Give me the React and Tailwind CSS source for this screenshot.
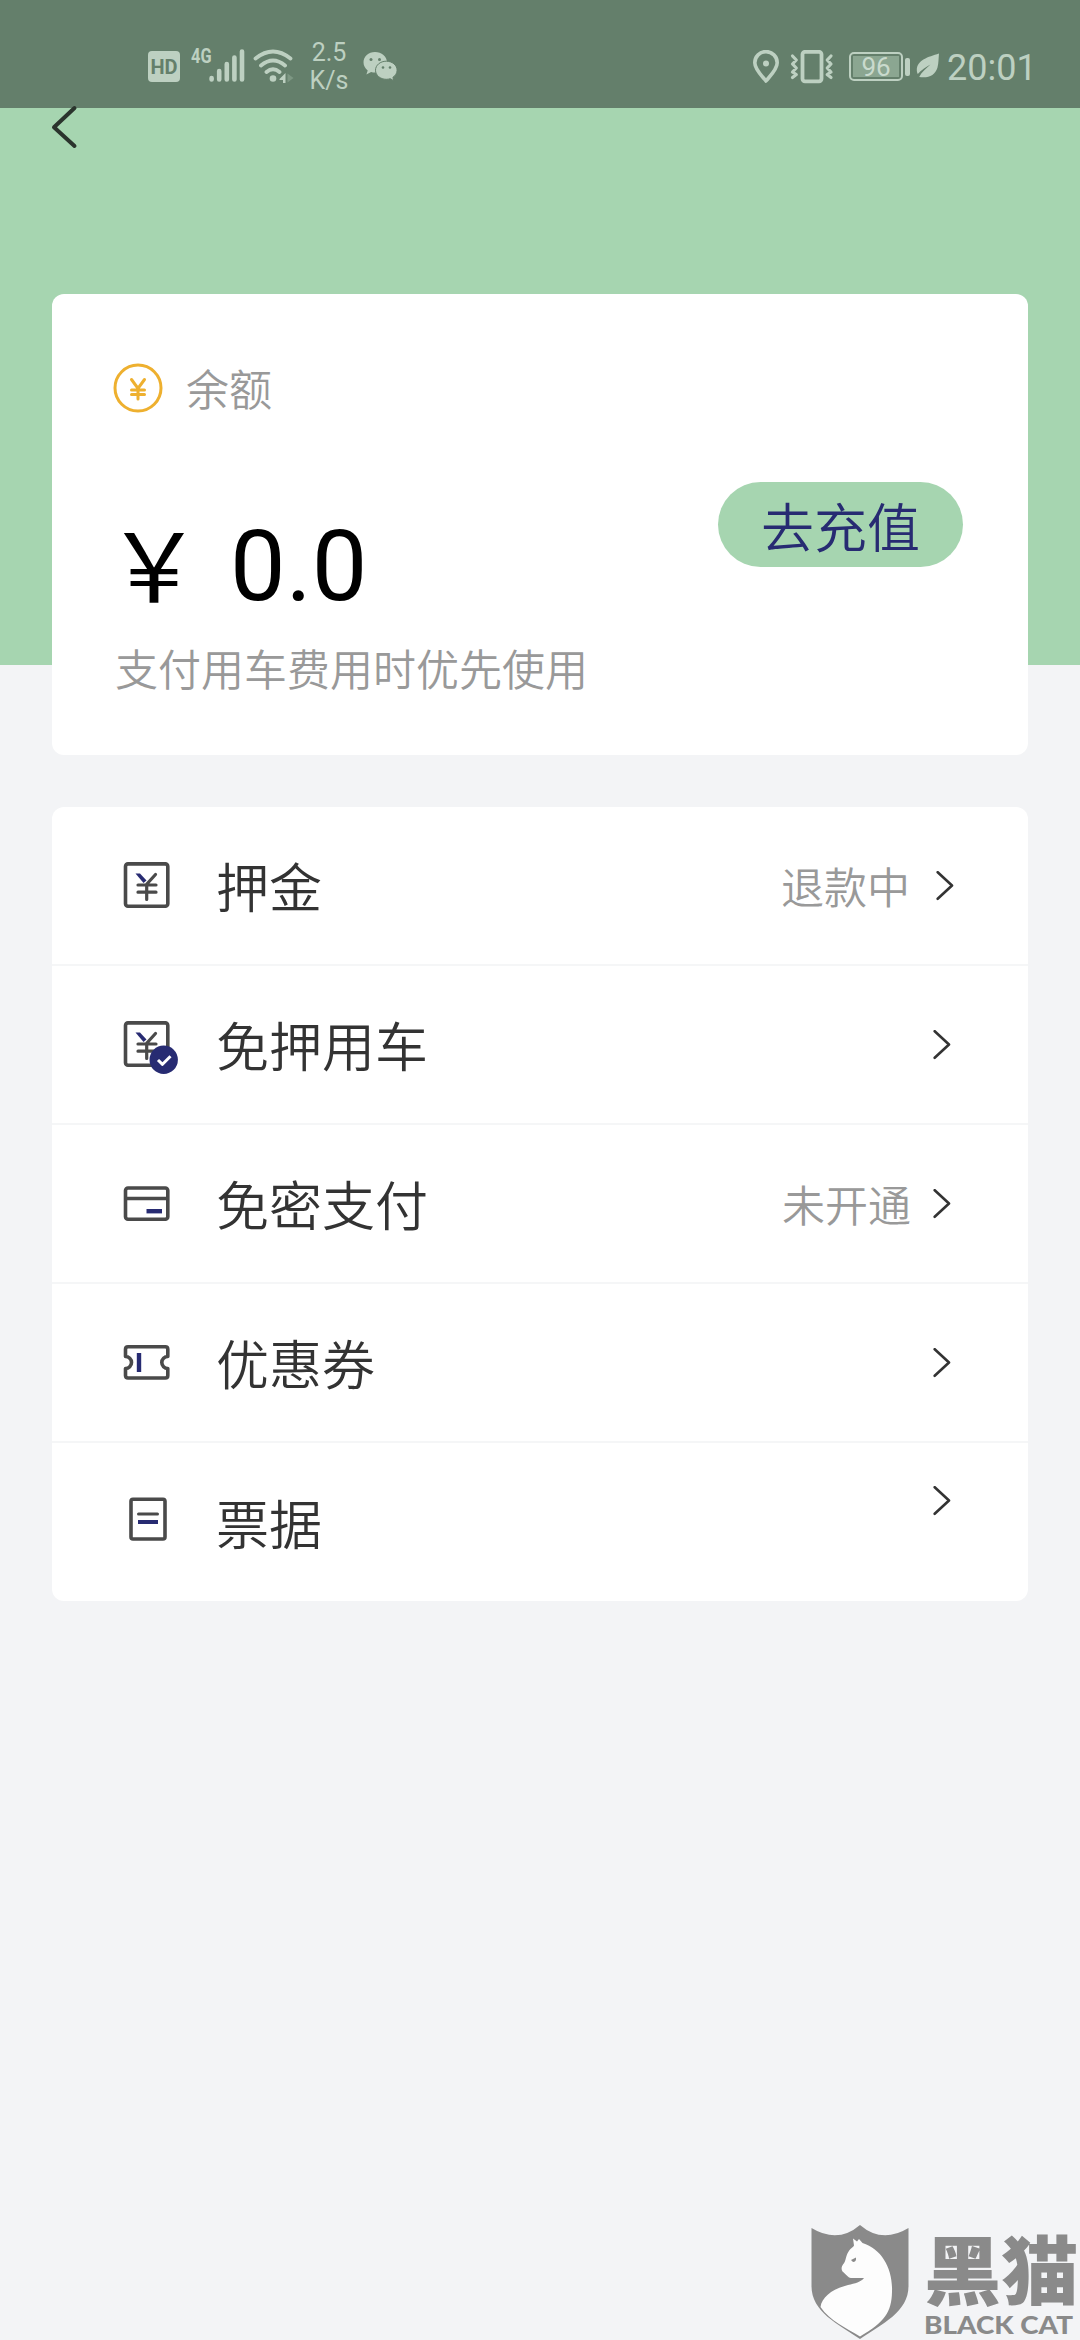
const cjk = "font-['Noto_Sans_CJK_SC',sans-serif]";
const roboto = "font-[Roboto,'Noto_Sans_CJK_SC',sans-serif]";

function StatusBar() {
  return (
    <div className={`flex h-[108px] items-start bg-[#647f6b] pl-[148px] text-[#bdd0c1] ${roboto}`}>
      <div className="mt-[51px] flex h-[31px] w-8 items-center justify-center rounded-[4px] bg-[#bdd0c1] text-[20px] leading-none font-bold text-[#647f6b]">
        HD
      </div>
      <span className="mt-[45px] ml-[11px] w-[18px] origin-left scale-x-[0.78] text-[21px] leading-[23px] font-bold">4G</span>
      <svg className="mt-[49px]" width="36" height="34" viewBox="0 0 36 34" stroke="currentColor" strokeWidth="4.600" strokeLinecap="round">
        <path d="M2.600 30.500V29M10.200 30.500V22M17.800 30.500V15M25.400 30.500V8.500M33 30.500V2.500" />
      </svg>
      <svg className="mt-[48px] ml-[8px]" width="42" height="36" viewBox="0 0 42 36" fill="none" stroke="currentColor" strokeWidth="3.800" strokeLinecap="round">
        <path d="M2.500 10.500Q20 -3.500 37.500 10.500M8 17.500Q20 7.500 32 17.500M13.500 24Q20 18.500 26.500 24" />
        <circle cx="20" cy="30.500" r="3.300" fill="currentColor" stroke="none" />
        <path d="M26.500 31l6-6v10h-2.500v-3h-3.500z" fill="currentColor" stroke="none" />
        <path d="M34.500 25.500v9l6-4.500z" fill="#7d9783" stroke="none" />
      </svg>
      <div className="mt-[39px] ml-[14px] w-[40px] text-center text-[25px] leading-[28px]">
        <div>2.5</div>
        <div>K/s</div>
      </div>
      <svg className="mt-[52px] ml-[14px]" width="35" height="29" viewBox="0 0 35 29">
        <path d="M12 0C5.400 0 .5 4.500 .5 10.300c0 3.300 1.600 6.200 4.200 8.100L3.400 22.500l4.700-2.500c1.200.4 2.600.6 3.900.6 6.600 0 12-4.600 12-10.300S18.600 0 12 0z" fill="currentColor" />
        <path d="M23.300 9.200c-6 0-10.800 4-10.800 9s4.800 9.100 10.800 9.100c1.400 0 2.700-.2 3.900-.6l3.600 2-.9-3.400c2.600-1.700 4.200-4.200 4.200-7.100 0-5-4.800-9-10.800-9z" fill="currentColor" stroke="#647f6b" strokeWidth="1" />
        <g fill="#647f6b">
          <circle cx="8" cy="7.500" r="1.500" />
          <circle cx="16.500" cy="7.500" r="1.500" />
          <circle cx="20" cy="15.500" r="1.300" />
          <circle cx="27" cy="15.500" r="1.300" />
        </g>
      </svg>
      <svg className="mt-[50px] ml-[355px]" width="26" height="34" viewBox="0 0 26 34" fill="none" stroke="currentColor" strokeWidth="3.600">
        <path d="M13 31C9 26 1.800 19.500 1.800 12.800a11.200 11.200 0 0 1 22.400 0C24.200 19.500 17 26 13 31z" strokeLinejoin="round" />
        <circle cx="13" cy="13.500" r="3" fill="currentColor" stroke="none" />
      </svg>
      <svg className="mt-[50px] ml-[11px]" width="44" height="34" viewBox="0 0 44 34" fill="none" stroke="currentColor" strokeWidth="3.200" strokeLinecap="round" strokeLinejoin="round">
        <rect x="12.500" y="1.800" width="19" height="29.500" rx="2.500" strokeWidth="3.800" />
        <path d="M2.500 6l3.800 4-3.800 4 3.800 4-3.800 4 3.800 2.500-3.800 3M41 6l-3.800 4 3.800 4-3.800 4 3.800 4-3.800 2.500 3.800 3" />
      </svg>
      <div className="mt-[52px] ml-[15px] flex h-[29px] w-[54px] rounded-[5px] border-2 border-[#bdd0c1] p-[2px]">
        <div className="flex flex-1 items-center justify-center bg-[#8ba691] text-[26px] leading-none text-[#c9dacd]">96</div>
      </div>
      <div className="mt-[58px] ml-[2px] h-[18px] w-[5px] rounded-[2px] bg-[#bdd0c1]" />
      <svg className="mt-[53px] ml-[6px]" width="24" height="25" viewBox="0 0 24 25">
        <path d="M23 .5C12 4 1 7 .8 17c0 1.500.4 3 1 4C5 17 10 14 14.500 11.500 10 15.500 5.500 19 3.200 24c9 1.500 16-1.500 18.300-9.500C22.700 10 22.500 5 23 .5z" fill="currentColor" />
      </svg>
      <span className="mt-[47px] ml-[7px] text-[36px] leading-[42px]">20:01</span>
    </div>
  );
}

function Chevron({ className = "" }) {
  return (
    <svg className={className} width="18" height="30" viewBox="0 0 18 30" fill="none" stroke="#333" strokeWidth="2.600" strokeLinecap="round" strokeLinejoin="round">
      <path d="M1.700 1.200L16 14.500 1.700 27.800" />
    </svg>
  );
}

function RowIcon({ children }) {
  return (
    <svg className="ml-[68px]" width="60" height="60" viewBox="0 0 60 60" fill="none" stroke="#4a4a4a" strokeWidth="3.600" strokeLinejoin="round">
      {children}
    </svg>
  );
}

function YenBox() {
  return (
    <>
      <rect x="5.500" y="7.900" width="42.300" height="42.300" rx="2.500" />
      <path d="M26.700 28.500V43.500M18 29h18M18 36.200h18M35.500 18.500L26 29" strokeWidth="3.200" strokeLinecap="round" />
      <path d="M15.500 17.500h4.500l6.500 7-3 2.500z" fill="#272b72" stroke="none" />
    </>
  );
}

const rows = [
  {
    label: "押金",
    status: "退款中",
    chevron: "ml-[28px] mr-[74px]",
    icon: <YenBox />,
  },
  {
    label: "免押用车",
    chevron: "mr-[77px]",
    icon: (
      <>
        <YenBox />
        <circle cx="43.700" cy="44.700" r="14.200" fill="#272b72" stroke="none" />
        <path d="M38 45l4.500 4.300 8-8" stroke="#fff" strokeWidth="3" />
      </>
    ),
  },
  {
    label: "免密支付",
    status: "未开通",
    chevron: "ml-[24px] mr-[77px]",
    icon: (
      <>
        <rect x="5.500" y="14" width="42.300" height="31.300" rx="2.500" />
        <path d="M5 24.500h43" />
        <path d="M26.500 37.200h15.500" stroke="#272b72" strokeWidth="4.400" />
      </>
    ),
  },
  {
    label: "优惠券",
    chevron: "mr-[77px]",
    icon: (
      <>
        <path d="M8 13.700h37.300q2.500 0 2.500 2.500v7.300a6 6 0 0 0 0 12v7q0 2.500-2.500 2.500H8q-2.500 0-2.500-2.500v-7a6 6 0 0 0 0-12v-7.300q0-2.500 2.500-2.500z" />
        <path d="M19 20v19" stroke="#272b72" strokeWidth="4.400" />
      </>
    ),
  },
  {
    label: "票据",
    chevron: "mr-[77px] mb-[44px]",
    icon: (
      <>
        <rect x="11" y="6.300" width="34" height="39.700" rx="2" />
        <path d="M18.500 21h19" strokeLinecap="round" strokeWidth="3" />
        <path d="M18 29h20" stroke="#272b72" strokeWidth="4" />
      </>
    ),
  },
];

function BalanceCard() {
  return (
    <section className="h-[461px] rounded-[12px] bg-white pt-[64px] pr-[65px] pl-[61px]">
      <div className="flex h-[60px] items-center">
        <svg width="50" height="50" viewBox="0 0 50 50" fill="none" stroke="#eeb02f" strokeWidth="3">
          <circle cx="25" cy="25" r="23" />
          <path d="M18.500 16.500l6.500 9 6.500-9M25 25v11M18.500 27h13M18.500 31.500h13" strokeLinecap="round" />
        </svg>
        <span className="mb-[2px] ml-[23px] text-[43px] leading-[58px] font-[350] text-[#999]">余额</span>
      </div>
      <div className="flex items-start justify-between">
        <div className="mt-[98px] flex h-[100px] items-center text-black">
          <span className="mb-[10px] -ml-[7px] w-[124px] text-[96px] leading-[100px]">￥</span>
          <span className={`text-[99px] leading-[100px] ${roboto}`}>0.0</span>
        </div>
        <button className="mt-[64px] h-[85px] w-[245px] rounded-full bg-[#a6d5b0] text-[53px] leading-[84px] font-[350] text-[#272b72]">
          去充值
        </button>
      </div>
      <p className="mt-[21px] ml-[2px] text-[43px] leading-[60px] font-[350] text-[#999]">支付用车费用时优先使用</p>
    </section>
  );
}

function MenuRow({ row, last }) {
  return (
    <li className={`flex h-[159px] items-center ${last ? "" : "border-b-2 border-[#f5f6f7]"}`}>
      <RowIcon>{row.icon}</RowIcon>
      <span className="mb-[2px] ml-[36px] flex-1 text-[53px] leading-[80px] font-[350] text-[#333]">{row.label}</span>
      {row.status && <span className="-mr-[2px] mb-[2px] text-[43px] leading-[60px] font-[350] text-[#999]">{row.status}</span>}
      <Chevron className={row.chevron} />
    </li>
  );
}

function Watermark() {
  return (
    <div className="absolute right-0 bottom-0 flex h-[116px] w-[270px] text-[#8a8a8a]">
      <svg width="100" height="116" viewBox="0 0 100 116">
        <path d="M1.500 4Q28 20 50 1 72 20 98.500 4V62C98.500 88 72 100 50 115 28 100 1.500 88 1.500 62z" fill="currentColor" />
        <path d="M43 14.500l4 3 2-2.500 3.500 4C72 25 83 45 82 68 81.500 88 75 98 50 112.500 36 104 20 97 10.500 83 12 73 22 65 38 61c7-1.500 13-3 16-7H41c-3 0-6-5-8.500-6.500-1.500-2-1-5 .5-7 3-3 2.500-8 5-12 2-4 5-5 6-7z" fill="#fdfdfd" />
        <path d="M41 36l5-2.500c.5 3-1 4.500-3 4.500z" fill="currentColor" />
      </svg>
      <div className="ml-[14px] w-[156px]">
        <div className="h-[86px] origin-left scale-x-[1.03] text-[75px] leading-[86px] font-black whitespace-nowrap">黑猫</div>
        <div className="mt-[5px] h-[20px] origin-left scale-x-[1.16] font-[Lato,sans-serif] text-[24px] leading-[20px] font-black whitespace-nowrap">BLACK CAT</div>
      </div>
    </div>
  );
}

export default function App() {
  return (
    <div className={`relative h-[2340px] w-[1080px] overflow-hidden bg-[#f3f4f6] ${cjk}`}>
      <header className="h-[665px] bg-[#a6d5b0]">
        <StatusBar />
        <svg className="-mt-[3px] ml-[51px]" width="27" height="44" viewBox="0 0 27 44" fill="none" stroke="#2b342d" strokeWidth="4" strokeLinecap="round" strokeLinejoin="round">
          <path d="M23.500 3L3 22.300 23.500 41" />
        </svg>
      </header>
      <main className="mx-[52px] -mt-[371px] flex flex-col gap-[52px]">
        <BalanceCard />
        <ul className="h-[794px] rounded-[12px] bg-white">
          {rows.map((row, i) => (
            <MenuRow key={row.label} row={row} last={i === rows.length - 1} />
          ))}
        </ul>
      </main>
      <Watermark />
    </div>
  );
}
